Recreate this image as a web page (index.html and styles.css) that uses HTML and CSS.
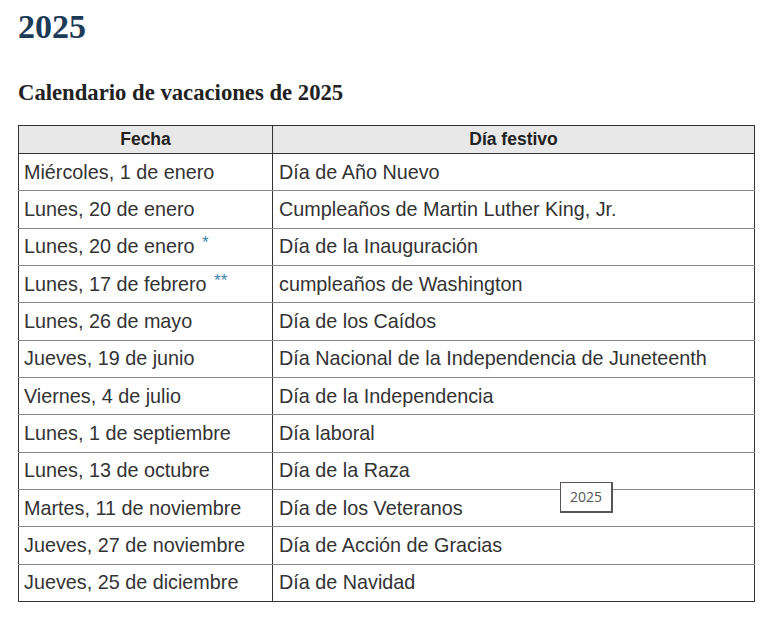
FILE: index.html
```html
<!DOCTYPE html>
<html lang="es">
<head>
<meta charset="utf-8">
<link rel="stylesheet" href="styles.css">
</head>
<body>
<div class="page">
  <h1 class="title">2025</h1>
  <h2 class="subtitle">Calendario de vacaciones de 2025</h2>
  <div class="table-wrap">
    <table class="holidays">
      <thead>
        <tr><th class="c1">Fecha</th><th>Día festivo</th></tr>
      </thead>
      <tbody>
        <tr><td>Miércoles, 1 de enero</td><td>Día de Año Nuevo</td></tr>
        <tr><td>Lunes, 20 de enero</td><td>Cumpleaños de Martin Luther King, Jr.</td></tr>
        <tr><td>Lunes, 20 de enero <sup class="mark">*</sup></td><td>Día de la Inauguración</td></tr>
        <tr><td>Lunes, 17 de febrero <sup class="mark">**</sup></td><td>cumpleaños de Washington</td></tr>
        <tr><td>Lunes, 26 de mayo</td><td>Día de los Caídos</td></tr>
        <tr><td>Jueves, 19 de junio</td><td>Día Nacional de la Independencia de Juneteenth</td></tr>
        <tr><td>Viernes, 4 de julio</td><td>Día de la Independencia</td></tr>
        <tr><td>Lunes, 1 de septiembre</td><td>Día laboral</td></tr>
        <tr><td>Lunes, 13 de octubre</td><td>Día de la Raza</td></tr>
        <tr><td>Martes, 11 de noviembre</td><td>Día de los Veteranos</td></tr>
        <tr><td>Jueves, 27 de noviembre</td><td>Día de Acción de Gracias</td></tr>
        <tr><td>Jueves, 25 de diciembre</td><td>Día de Navidad</td></tr>
      </tbody>
    </table>
    <div class="tooltip">2025</div>
  </div>
</div>
</body>
</html>
```

FILE: styles.css
```css
html, body {
  margin: 0;
  padding: 0;
  background: #ffffff;
}
.page {
  padding: 0 14px 0 18px;
}
.title {
  margin: 0;
  padding-top: 6.5px;
  font-family: "Liberation Serif", serif;
  font-weight: bold;
  font-size: 34px;
  line-height: 40px;
  color: #1c3b57;
}
.subtitle {
  margin: 32px 0 0 0;
  font-family: "Liberation Serif", serif;
  font-weight: bold;
  font-size: 22.7px;
  line-height: 28px;
  color: #222222;
}
.table-wrap {
  position: relative;
  margin-top: 18.5px;
  width: 737px;
}
.holidays {
  width: 737px;
  border-collapse: collapse;
  border: 1px solid #333333;
  font-family: "Liberation Sans", Arial, sans-serif;
  color: #333333;
}
.holidays th {
  background: #e8e8e8;
  font-weight: bold;
  font-size: 17.5px;
  height: 27px;
  padding: 0;
  text-align: center;
  border: 1px solid #333333;
  color: #222222;
}
.holidays th.c1 {
  width: 253px;
}
.holidays td {
  font-size: 19.8px;
  height: 36.33px;
  padding: 0 5px;
  border-top: 1px solid #888888;
  border-bottom: 1px solid #888888;
  border-left: 1px solid #333333;
  border-right: 1px solid #333333;
  text-align: left;
  vertical-align: middle;
}
.holidays td + td {
  padding-left: 6px;
}
.holidays tbody tr:last-child td {
  border-bottom: 1px solid #333333;
}
.mark {
  color: #3a86ad;
  font-size: 17px;
  line-height: 1;
  vertical-align: top;
  position: relative;
  top: -1px;
  margin-left: 2px;
}
.tooltip {
  position: absolute;
  left: 542px;
  top: 357px;
  width: 53px;
  height: 31px;
  box-sizing: border-box;
  border: 1px solid #555555;
  border-width: 1px 2px 2px 1px;
  background: #ffffff;
  font-family: "Open Sans", sans-serif;
  font-size: 14px;
  line-height: 27px;
  text-align: center;
  color: #555555;
}
```
